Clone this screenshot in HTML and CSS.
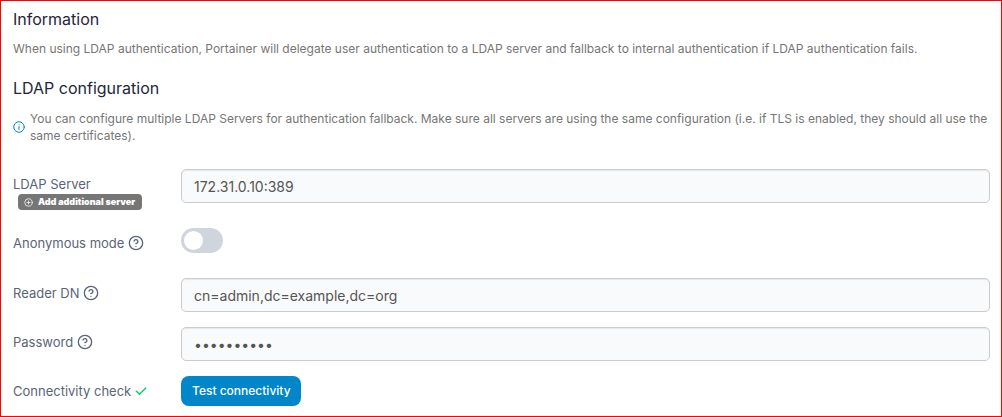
FILE: index.html
```html
<!DOCTYPE html>
<html lang="en">
<head>
<meta charset="utf-8">
<title>LDAP configuration</title>
<link rel="stylesheet" href="styles.css">
</head>
<body>
<main class="panel">
  <h2 class="title">Information</h2>
  <p class="text">When using LDAP authentication, Portainer will delegate user authentication to a LDAP server and fallback to internal authentication if LDAP authentication fails.</p>
  <h2 class="title title-config">LDAP configuration</h2>
  <div class="note">
    <svg class="icon-info" viewBox="0 0 24 24"><circle cx="12" cy="12" r="10.5"/><path d="M12 17v-6M12 7.500h.01"/></svg>
    <p class="text">You can configure multiple LDAP Servers for authentication fallback. Make sure all servers are using the same configuration (i.e. if TLS is enabled, they should all use the same certificates).</p>
  </div>
  <form class="form">
    <div class="row">
      <div class="label-stack">
        <label class="label" for="server">LDAP Server</label>
        <button class="add" type="button"><svg class="icon-add" viewBox="0 0 24 24"><circle cx="12" cy="12" r="10"/><path d="M12 8v8M8 12h8"/></svg>Add additional server</button>
      </div>
      <input class="field" id="server" type="text" value="172.31.0.10:389">
    </div>
    <div class="row row-mode">
      <label class="label" for="anon">Anonymous mode <svg class="icon-help" viewBox="0 0 24 24"><circle cx="12" cy="12" r="10"/><path d="M9.09 9a3 3 0 0 1 5.83 1c0 2-3 3-3 3M12 17h.01"/></svg></label>
      <input class="switch" id="anon" type="checkbox">
    </div>
    <div class="row">
      <label class="label" for="reader">Reader DN <svg class="icon-help" viewBox="0 0 24 24"><circle cx="12" cy="12" r="10"/><path d="M9.09 9a3 3 0 0 1 5.83 1c0 2-3 3-3 3M12 17h.01"/></svg></label>
      <input class="field" id="reader" type="text" value="cn=admin,dc=example,dc=org">
    </div>
    <div class="row">
      <label class="label" for="password">Password <svg class="icon-help" viewBox="0 0 24 24"><circle cx="12" cy="12" r="10"/><path d="M9.09 9a3 3 0 0 1 5.83 1c0 2-3 3-3 3M12 17h.01"/></svg></label>
      <input class="field" id="password" type="password" value="adminadmin">
    </div>
    <div class="row">
      <label class="label" for="test">Connectivity check <svg class="icon-check" viewBox="0 0 24 24"><path d="M21.500 6 9 18.500l-6-6"/></svg></label>
      <button class="test" id="test" type="button">Test connectivity</button>
    </div>
  </form>
</main>
</body>
</html>
```
FILE: styles.css
```css
* { box-sizing: border-box; }
body { margin: 0; background: #fff; font-family: Inter, "Liberation Sans", sans-serif; font-size: 13px; color: #344054; }
.panel { min-height: 100vh; padding: 8px 11px 9px 12px; border: 1px solid #f00; }
.title { margin: 0; font-size: 16px; line-height: 20px; font-weight: 400; color: #23263b; }
.title-config { margin-top: 21px; }
.text { margin: 0; font-size: 12px; line-height: 17px; color: #767676; }
.title + .text { margin-top: 11px; }
.note { display: flex; align-items: center; gap: 5px; margin-top: 12px; }
svg { fill: none; stroke: currentColor; stroke-width: 2; stroke-linecap: round; stroke-linejoin: round; flex: none; }
.icon-info { width: 12px; height: 12px; color: #0086c9; }
.form { display: flex; flex-direction: column; gap: 15px; margin-top: 25px; }
.row { display: grid; grid-template-columns: 168px 1fr; align-items: start; }
.row-mode { margin: 3px 0 10px; }
.label { display: flex; align-items: center; gap: 4px; padding-top: 6px; line-height: 18px; font-weight: 400; color: #5a6478; }
.label-stack { display: flex; flex-direction: column; align-items: flex-start; gap: 1px; }
.add { display: flex; align-items: center; gap: 5px; height: 16px; margin-left: 5px; padding: 0 7px 0 6px; border: 0; border-radius: 4px; background: #767676; color: #fff; font: 900 9px/16px Inter, sans-serif; }
.icon-add { width: 9px; height: 9px; }
.icon-help { width: 16px; height: 16px; }
.icon-check { width: 12px; height: 12px; color: #17c671; stroke-width: 3; }
.field { width: 100%; height: 34px; padding: 0 12px; border: 1px solid #ccc; border-radius: 5px; background: #f9fafb; box-shadow: inset 0 1px 1px rgba(0, 0, 0, .075); color: #555; font: 400 14px/20px Inter, sans-serif; }
.switch { appearance: none; display: flex; align-items: center; width: 42px; height: 25px; margin: 0; padding: 3px; border-radius: 13px; background: #d0d5dd; }
.switch::before { content: ""; width: 19px; height: 19px; border-radius: 50%; background: #fff; }
.test { justify-self: start; height: 30px; padding: 0 10px 0 11px; border: 0; border-radius: 8px; background: #0086c9; color: #fff; font: 500 12px/18px Inter, sans-serif; }
```
